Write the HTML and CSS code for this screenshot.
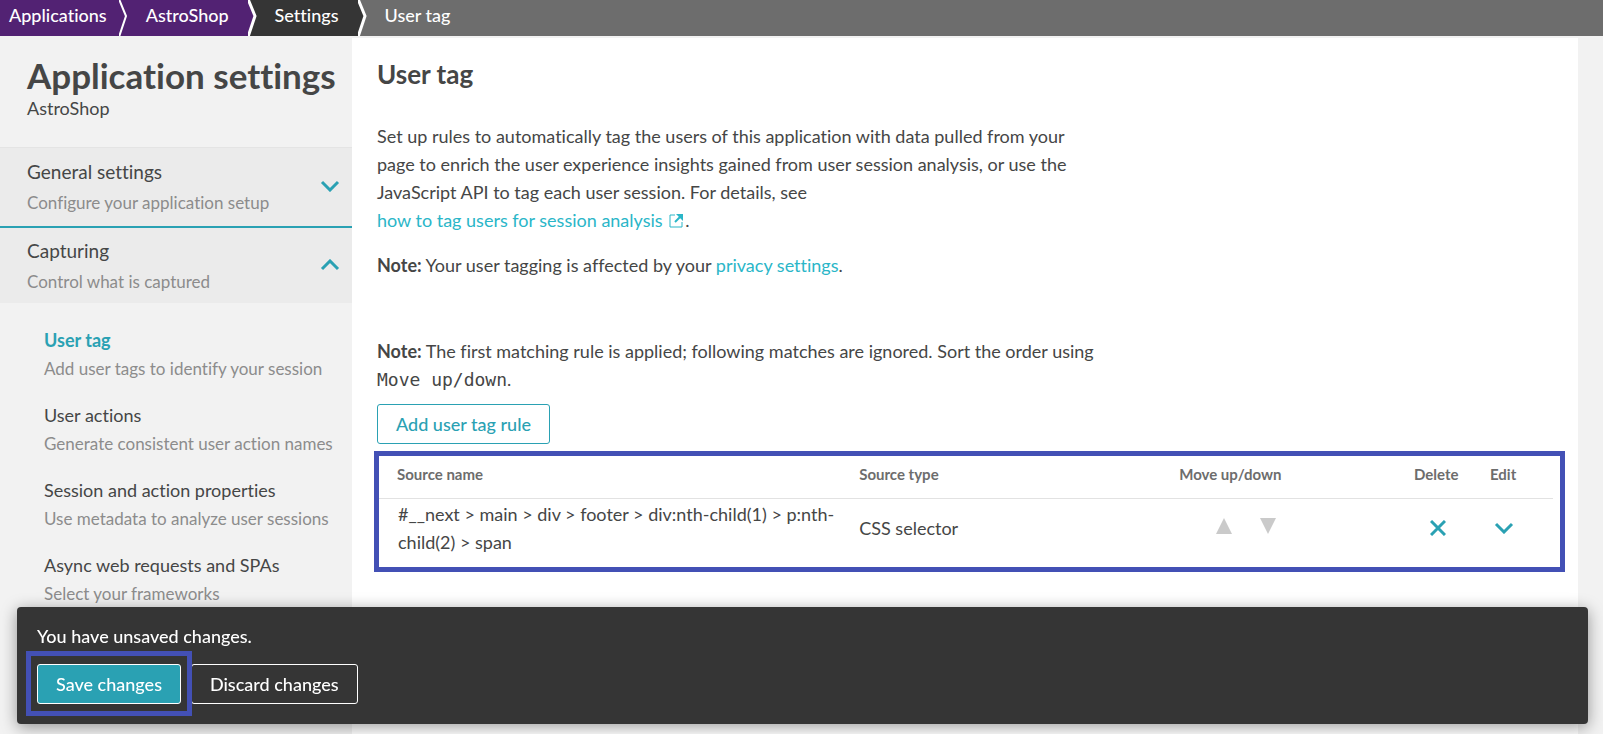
FILE: index.html
```html
<!DOCTYPE html>
<html lang="en">
<head>
<meta charset="utf-8">
<title>User tag - Application settings</title>
<link rel="stylesheet" href="styles.css">
</head>
<body>
<nav class="breadcrumb" aria-label="Breadcrumb">
  <a class="crumb crumb-purple" href="#">Applications<svg class="crumb-arrow" viewBox="0 0 9 36" aria-hidden="true"><path class="fill-purple" d="M0 0H1L8 16L1 36H0Z"/><path class="crumb-line" d="M0 -1L7 16L0 37"/></svg></a>
  <a class="crumb crumb-purple" href="#">AstroShop<svg class="crumb-arrow" viewBox="0 0 9 36" aria-hidden="true"><path class="fill-purple" d="M0 0H1L8 16L1 36H0Z"/><path class="crumb-line crumb-line-thick" d="M0 -1L7 16L0 37"/></svg></a>
  <a class="crumb crumb-dark" href="#">Settings<svg class="crumb-arrow" viewBox="0 0 9 36" aria-hidden="true"><path class="fill-dark" d="M0 0H1L8 16L1 36H0Z"/><path class="crumb-line crumb-line-thick" d="M0 -1L7 16L0 37"/></svg></a>
  <span class="crumb crumb-current" aria-current="page">User tag</span>
</nav>

<div class="page">
  <aside class="sidebar">
    <header class="sidebar-head">
      <h2 class="sidebar-title">Application settings</h2>
      <p class="sidebar-app">AstroShop</p>
    </header>
    <button class="group" type="button" aria-expanded="false">
      <span class="group-text"><span class="group-name">General settings</span><span class="group-desc">Configure your application setup</span></span>
      <svg class="chevron" viewBox="0 0 20 12" aria-hidden="true"><path d="M2 2L10 10L18 2"/></svg>
    </button>
    <button class="group group-open" type="button" aria-expanded="true">
      <span class="group-text"><span class="group-name">Capturing</span><span class="group-desc">Control what is captured</span></span>
      <svg class="chevron" viewBox="0 0 20 12" aria-hidden="true"><path d="M2 10L10 2L18 10"/></svg>
    </button>
    <nav class="submenu" aria-label="Capturing">
      <a class="item item-active" href="#"><span class="item-name">User tag</span><span class="item-desc">Add user tags to identify your session</span></a>
      <a class="item" href="#"><span class="item-name">User actions</span><span class="item-desc">Generate consistent user action names</span></a>
      <a class="item" href="#"><span class="item-name">Session and action properties</span><span class="item-desc">Use metadata to analyze user sessions</span></a>
      <a class="item" href="#"><span class="item-name">Async web requests and SPAs</span><span class="item-desc">Select your frameworks</span></a>
    </nav>
  </aside>

  <main class="content">
    <h1 class="title">User tag</h1>
    <div class="copy">
      <p>Set up rules to automatically tag the users of this application with data pulled from your page to enrich the user experience insights gained from user session analysis, or use the JavaScript API to tag each user session. For details, see <span class="keep"><a class="link" href="#">how to tag users for session analysis <svg class="external" viewBox="0 0 14 14" aria-hidden="true"><path class="external-box" d="M6 1H1V13H13V8"/><path class="external-head" d="M7 0H14V7Z"/><path class="external-stem" d="M11 3L6 8"/></svg></a>.</span></p>
      <p><strong>Note:</strong> Your user tagging is affected by your <a class="link" href="#">privacy settings</a>.</p>
      <p class="order-note"><strong>Note:</strong> The first matching rule is applied; following matches are ignored. Sort the order using <code>Move up/down</code>.</p>
    </div>
    <button class="btn btn-outline" type="button">Add user tag rule</button>
    <div class="rules">
      <table class="rules-table">
        <thead>
          <tr><th class="col-name">Source name</th><th class="col-type">Source type</th><th class="col-move">Move up/down</th><th class="col-delete">Delete</th><th class="col-edit">Edit</th></tr>
        </thead>
        <tbody>
          <tr>
            <td class="rule-name">#__next &gt; main &gt; div &gt; footer &gt; div:nth-child(1) &gt; p:nth-child(2) &gt; span</td>
            <td>CSS selector</td>
            <td><div class="movers">
              <button class="icon-btn" type="button" aria-label="Move up" disabled><svg class="triangle" viewBox="0 0 16 16"><path d="M8 0L16 16H0Z"/></svg></button>
              <button class="icon-btn" type="button" aria-label="Move down" disabled><svg class="triangle" viewBox="0 0 16 16"><path d="M0 0H16L8 16Z"/></svg></button>
            </div></td>
            <td class="cell-icon"><button class="icon-btn" type="button" aria-label="Delete"><svg class="cross" viewBox="0 0 16 16"><path d="M1 1L15 15M15 1L1 15"/></svg></button></td>
            <td class="cell-icon"><button class="icon-btn" type="button" aria-label="Edit"><svg class="chevron" viewBox="0 0 20 12"><path d="M2 2L10 10L18 2"/></svg></button></td>
          </tr>
        </tbody>
      </table>
    </div>
  </main>
</div>

<div class="toast" role="status">
  <p class="toast-text">You have unsaved changes.</p>
  <div class="toast-actions">
    <button class="btn btn-save" type="button">Save changes</button>
    <button class="btn btn-discard" type="button">Discard changes</button>
  </div>
</div>
</body>
</html>
```
FILE: styles.css
```css
:root {
  --teal: #2ab6c8;
  --teal-dark: #2aa1b3;
  --text: #454646;
  --muted: #8c8c8c;
  --dark: #353535;
  --purple: #522273;
  --panel: #f2f2f2;
  --frame: #4350b5;
}

* { box-sizing: border-box; }

body {
  margin: 0;
  height: 100vh;
  overflow: hidden;
  display: flex;
  flex-direction: column;
  background: var(--panel);
  color: var(--text);
  font: 18px/28px Lato, "Noto Sans", sans-serif;
  font-variant-ligatures: none;
}

h1, h2, p { margin: 0; }
a { text-decoration: none; }
button { font: inherit; font-variant-ligatures: none; cursor: pointer; }
svg { display: block; fill: none; }

.breadcrumb {
  display: flex;
  flex: none;
  height: 36px;
  background: #6d6d6d;
  line-height: 31px;
  font-weight: 500;
}
.crumb { position: relative; color: #fff; padding: 0 19px 0 27px; }
.crumb:first-child { padding: 0 12px 0 9px; }
.crumb-purple { background: var(--purple); }
.crumb-dark { background: var(--dark); }
.crumb-arrow { position: absolute; z-index: 1; top: 0; left: 100%; width: 9px; height: 36px; overflow: hidden; }
.fill-purple { fill: var(--purple); }
.fill-dark { fill: var(--dark); }
.crumb-line { stroke: #fff; stroke-width: 2; }
.crumb-line-thick { stroke-width: 3; }

.page { display: flex; flex: 1; min-height: 0; }

.sidebar { flex: none; width: 352px; }
.sidebar-head { padding: 19px 0 26px 27px; border-bottom: 1px solid #e4e4e4; }
.sidebar-title { font-size: 35px; line-height: 40px; font-weight: 700; white-space: nowrap; }
.sidebar-app { line-height: 26px; }

.group {
  display: flex;
  align-items: center;
  justify-content: space-between;
  width: 100%;
  padding: 9px 12px 7px 27px;
  border: 0;
  background: #ebebeb;
  color: var(--text);
  text-align: left;
}
.group-open { border-top: 2px solid var(--teal-dark); padding: 8px 12px 5px 27px; }
.group-name, .group-desc, .item-name, .item-desc { display: block; }
.group-name { font-size: 19px; line-height: 30px; }
.group-desc { line-height: 32px; }
.group-desc, .item-desc { font-size: 17px; color: var(--muted); }
.chevron { width: 20px; height: 12px; stroke: var(--teal-dark); stroke-width: 3; }
.group .chevron { margin-bottom: 4px; }

.submenu { display: flex; flex-direction: column; gap: 17px; padding: 23px 0 0 44px; }
.item { color: var(--text); }
.item-desc { line-height: 30px; }
.item-active .item-name { color: var(--teal-dark); font-weight: 700; }

.content { flex: 1; min-width: 0; margin: 2px 25px 0 0; padding: 19px 25px; background: #fff; }
.title { font-size: 26px; line-height: 34px; }
.copy { max-width: 724px; padding-top: 31px; }
.copy p + p { margin-top: 17px; }
.copy p + .order-note { margin-top: 58px; }
.keep { white-space: nowrap; }
.link { color: var(--teal); }
.external { display: inline-block; width: 14px; height: 14px; vertical-align: -1px; margin: 0 2px; }
.external-box { stroke: var(--teal); stroke-width: 1; }
.external-head { fill: var(--teal); }
.external-stem { stroke: var(--teal); stroke-width: 2; }
code { font: 18px "DejaVu Sans Mono", monospace; }

.btn { height: 40px; padding: 0 18px; border: 1px solid #fff; border-radius: 3px; color: #fff; font-weight: 500; }
.btn-outline { margin-top: 11px; border-color: var(--teal-dark); background: #fff; color: var(--teal-dark); }

.rules { margin: 7px -12px 0 -3px; padding: 0 7px 0 0; border: 5px solid var(--frame); }
.rules-table { width: 100%; border-collapse: collapse; table-layout: fixed; }
.rules-table th {
  height: 42px;
  padding: 0 0 5px 18px;
  border-bottom: 1px solid #e2e2e2;
  color: #6d6d6d;
  font-size: 15px;
  text-align: left;
}
.rules-table td { padding: 1px 0 11px 18px; }
.rules-table .rule-name { padding-left: 19px; }
.col-type { width: 320px; }
.col-move { width: 20%; }
.col-delete { width: 76px; }
.col-edit { width: 81px; }
.icon-btn { display: block; padding: 0; border: 0; background: none; }
.movers { display: flex; gap: 28px; padding: 0 0 4px 37px; }
.triangle { width: 16px; height: 16px; fill: #cacaca; }
.cross { width: 16px; height: 16px; stroke: var(--teal-dark); stroke-width: 3; }
.rules-table .cell-icon { padding-left: 34px; }
.rules-table .cell-icon + .cell-icon { padding-left: 22px; }

.toast {
  position: fixed;
  z-index: 2;
  right: 15px;
  bottom: 10px;
  left: 17px;
  padding: 15px 20px 20px;
  border-radius: 4px;
  background: var(--dark);
  box-shadow: 0 3px 16px rgba(0, 0, 0, .4);
  color: #fff;
  font-weight: 500;
}
.toast-actions { display: flex; gap: 10px; padding-top: 14px; }
.btn-save { position: relative; z-index: 1; background: var(--teal-dark); }
.btn-save::after { content: ""; position: absolute; inset: -14px -12px -13px; border: 5px solid var(--frame); pointer-events: none; }
.btn-discard { background: transparent; }
```
